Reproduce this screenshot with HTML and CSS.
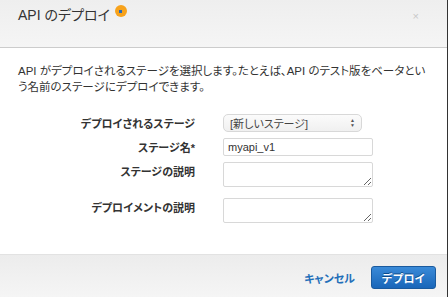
FILE: index.html
```html
<html lang="ja">
<head>
    <meta charset="UTF-8">
    <meta name="viewport" content="width=device-width, initial-scale=1.0">
    <title>API のデプロイ</title>
    <link rel="stylesheet" href="styles.css">
</head>
<body>
    <div class="modal">
        <header class="modal-header">
            <h1>API のデプロイ</h1>
            <span class="badge"><span class="dot"></span></span>
            <span class="close">&times;</span>
        </header>

        <main class="modal-body">
            <p class="intro">API がデプロイされるステージを選択します。たとえば、API のテスト版をベータという名前のステージにデプロイできます。</p>

            <form class="deploy-form">
                <div class="row">
                    <label>デプロイされるステージ</label>
                    <div class="select">
                        <span>[新しいステージ]</span>
                        <span class="arrows">&#9650;<br>&#9660;</span>
                    </div>
                </div>
                <div class="row">
                    <label>ステージ名*</label>
                    <input type="text" value="myapi_v1">
                </div>
                <div class="row">
                    <label>ステージの説明</label>
                    <textarea></textarea>
                </div>
                <div class="row last">
                    <label>デプロイメントの説明</label>
                    <textarea></textarea>
                </div>
            </form>
        </main>

        <footer class="modal-footer">
            <a href="#" class="cancel">キャンセル</a>
            <button type="button" class="deploy">デプロイ</button>
        </footer>
    </div>
</body>
</html>
```

FILE: styles.css
```css
body {
    margin: 0;
    padding: 0;
    font-family: "Liberation Sans", "Noto Sans CJK JP", sans-serif;
    font-feature-settings: "palt";
    color: #333;
    background-color: #fff;
}
.modal {
    width: 447px;
    height: 297px;
    border-right: 1px solid #333;
    display: flex;
    flex-direction: column;
    overflow: hidden;
}
.modal-header {
    height: 47px;
    border-bottom: 1px solid #ccc;
    background: linear-gradient(#eeeeee, #f5f5f5);
    display: flex;
    align-items: flex-start;
    padding: 0 18px;
    box-sizing: content-box;
}
.modal-header h1 {
    margin: 0;
    margin-top: 5px;
    font-size: 14px;
    font-weight: normal;
    line-height: 20px;
    color: #333;
}
.badge {
    width: 12px;
    height: 12px;
    margin: 5px 0 0 5px;
    border-radius: 50%;
    background-color: #f7a21b;
    display: flex;
    align-items: center;
    justify-content: center;
}
.badge .dot {
    width: 3px;
    height: 3px;
    background-color: #2d6bb5;
}
.close {
    margin-left: auto;
    margin-top: 10px;
    margin-right: 10px;
    font-size: 11px;
    color: #c8c8c8;
}
.modal-body {
    height: 206px;
    padding: 0 18px;
}
.intro {
    margin: 15px 0 0;
    font-size: 11.5px;
    line-height: 16px;
    color: #333;
}
.deploy-form {
    margin-top: 19px;
}
.row {
    display: flex;
    align-items: flex-start;
    margin-bottom: 6px;
}
.row.last {
    margin-top: 11px;
}
.row label {
    width: 177px;
    text-align: right;
    font-size: 11px;
    font-weight: bold;
    line-height: 14px;
    padding-top: 3px;
    margin-right: 28px;
    color: #333;
}
.select {
    width: 139px;
    height: 18px;
    box-sizing: border-box;
    border: 1px solid #d8d8d8;
    border-radius: 5px;
    background: linear-gradient(#fbfbfb, #f0f0f0);
    display: flex;
    align-items: center;
    padding: 0 6px 0 6px;
    font-size: 11px;
    color: #444;
}
.select .arrows {
    margin-left: auto;
    font-size: 5px;
    line-height: 5px;
    color: #555;
    text-align: center;
}
input, textarea {
    width: 150px;
    box-sizing: border-box;
    border: 1px solid #d8d8d8;
    border-radius: 2px;
    font-family: "Liberation Sans", "Noto Sans CJK JP", sans-serif;
    font-size: 11px;
    color: #333;
    margin: 0;
    display: block;
}
input {
    height: 18px;
    padding: 0 4px;
}
textarea {
    height: 25px;
    resize: vertical;
}
.modal-footer {
    flex: 1;
    border-top: 1px solid #e2e2e2;
    background: linear-gradient(#ececec, #f5f5f5);
    display: flex;
    align-items: flex-start;
    justify-content: flex-end;
    padding: 11px 11px 0 0;
}
.cancel {
    margin-top: 4px;
    margin-right: 16px;
    font-size: 11px;
    font-weight: bold;
    color: #1f6fb9;
    text-decoration: none;
}
.deploy {
    width: 65px;
    height: 23px;
    border: 1px solid #1a5a9e;
    border-radius: 3px;
    background: linear-gradient(#3a8ad8, #1966b9);
    color: #fff;
    font-family: "Liberation Sans", "Noto Sans CJK JP", sans-serif;
    font-size: 11px;
    font-weight: bold;
    text-shadow: 0 -1px 0 #0d4a8a;
    cursor: pointer;
}
```
